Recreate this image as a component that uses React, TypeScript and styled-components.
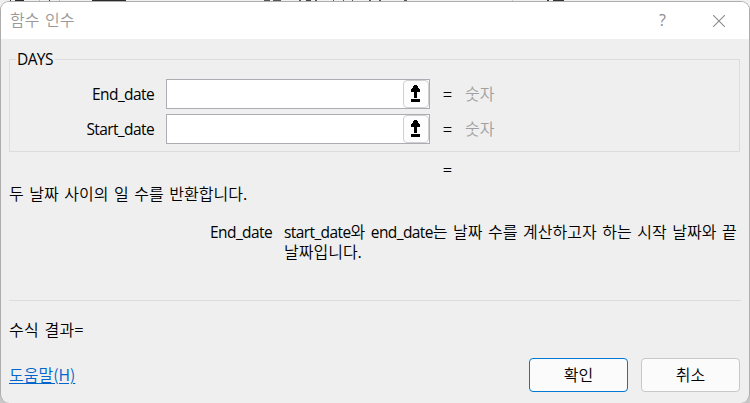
import React from 'react';
import styled, {createGlobalStyle} from 'styled-components';

const GlobalStyle = createGlobalStyle`
    * {
        box-sizing: border-box;
    }

    body {
        margin: 0;
        overflow: hidden;
    }
`;

// the sheet behind the dialog only peeks out along the edges
const Sheet = styled.div`
    width: 750px;
    height: 403px;
    padding-top: 1px;
    background:
        linear-gradient(90deg,
            transparent 10px, #333 10px 11px, transparent 11px 15px, #2b2b2b 15px 24px,
            transparent 24px 39px, #bbb 39px 40px, transparent 40px 49px, #333 49px 50px,
            transparent 50px 59px, #bbb 59px 60px, transparent 60px 92px, #2b2b2b 92px 126px,
            transparent 126px 264px, #555 264px 270px, transparent 270px 273px, #555 273px 281px,
            transparent 281px 299px, #555 299px 301px, transparent 301px 306px, #444 306px 311px,
            transparent 311px 315px, #555 315px 317px, transparent 317px 333px, #555 333px 334px,
            transparent 334px 343px, #555 343px 344px, transparent 344px 352px, #555 352px 353px,
            transparent 353px 369px, #555 369px 371px, transparent 371px 379px, #555 379px 381px,
            transparent 381px 404px, #555 404px 407px, transparent 407px 512px, #ccc 512px 513px,
            transparent 513px 547px, #333 547px 549px, transparent 549px 553px, #333 553px 564px,
            transparent 564px) 0 0 / 750px 1px no-repeat,
        linear-gradient(#f0f0f0 0 40px, #c8c8c8 40px 100%);
`;

const Dialog = styled.div`
    display: flex;
    flex-direction: column;
    width: 750px;
    height: 402px;
    border: 1px solid #adadad;
    border-bottom: 0;
    border-radius: 9px;
    overflow: hidden;
    background: #efefef;
    color: #000;
    font-family: "Noto Sans CJK KR", sans-serif;
    font-size: 16px;
    font-weight: 350;
    line-height: 20px;
    word-spacing: 2px;
`;

const TitleBar = styled.div`
    display: flex;
    align-items: center;
    height: 37px;
    flex: none;
    padding: 0 24px 0 9px;
    background: #fff;
    color: #999;
`;

const Title = styled.span`
    flex: 1;
    padding-bottom: 3px;
`;

const HelpMark = styled.span`
    margin-right: 47px;
    padding-bottom: 2px;
    color: #8c8c8c;
    font-family: "Open Sans", sans-serif;
    font-size: 16px;
    font-weight: 400;
`;

const Body = styled.div`
    display: flex;
    flex-direction: column;
    flex: 1;
    padding: 10px 8px 0;
`;

const Latin = styled.span`
    font-family: "Open Sans", sans-serif;
    font-size: 15.5px;
    font-weight: 400;
    letter-spacing: -0.6px;
    line-height: 1;
`;

const Group = styled.fieldset`
    height: 103px;
    margin: 0 1px 0 0;
    padding: 10px 0 0;
    border: 1px solid #dcdcdc;
    min-width: 0;
`;

const Legend = styled.legend`
    height: 20px;
    margin-left: 6px;
    padding: 0 2px 0 1px;
    line-height: 18px;
`;

const Field = styled.label`
    display: grid;
    grid-template-columns: 144px 264px 1fr;
    column-gap: 12px;
    align-items: center;
    height: 30px;
    margin-bottom: 5px;
`;

const FieldName = styled.span`
    text-align: right;
`;

const FieldLabel = styled(FieldName)`
    padding-bottom: 2px;
`;

const InputBox = styled.span`
    display: flex;
    height: 30px;
    border: 1px solid #abadb3;
    background: #fff;
`;

const Input = styled.input`
    flex: 1;
    min-width: 0;
    border: 0;
    outline: 0;
    padding: 0 4px;
    background: transparent;
    font: inherit;
`;

const PickButton = styled.button`
    display: flex;
    align-items: center;
    justify-content: center;
    width: 26px;
    height: 28px;
    padding: 0 1px 1px 0;
    border: 1px solid #d0d0d0;
    border-radius: 4px;
    background: #fdfdfd;
`;

const Preview = styled.span`
    display: flex;
    gap: 13px;
    padding: 0 0 2px 1px;
    color: #a0a0a0;
`;

const Equals = styled.span`
    width: 9px;
    color: #000;
    font-weight: 400;
`;

const ResultLine = styled.div`
    height: 20px;
    margin-top: 7px;
    padding-left: 434px;
`;

const Description = styled.p`
    margin: 4px 0 0;
`;

const ArgumentHelp = styled.div`
    display: grid;
    grid-template-columns: 263px 1fr;
    column-gap: 12px;
    height: 78px;
    margin-top: 19px;
    line-height: 19.5px;
    white-space: nowrap;
`;

const FormulaResult = styled.div`
    height: 50px;
    padding-top: 18px;
    border-top: 1px solid #dcdcdc;
    letter-spacing: 0.2px;
`;

const Footer = styled.div`
    display: flex;
    align-items: center;
    gap: 13px;
    height: 34px;
    margin-top: 8px;
    padding-right: 1px;
`;

const HelpLink = styled.a`
    margin-right: auto;
    padding-bottom: 2px;
    color: #0066cc;
    text-decoration: underline;
    text-underline-offset: 2px;
`;

const Button = styled.button<{$primary?: boolean}>`
    width: 99px;
    height: 34px;
    padding: 0 0 2px;
    border: 1px solid ${({$primary}) => ($primary ? '#0078d4' : '#c8c8c8')};
    border-radius: 4px;
    background: #fbfbfb;
    color: #000;
    font: inherit;
`;

const PickIcon = () => (
    <svg width="9" height="17" viewBox="0 0 9 17" shapeRendering="crispEdges">
        <path d="M3 0h3v1h1v2h1v1h1v3H6v6H3V7H0V4h1V3h1V1h1zM0 14h9v3H0z"/>
    </svg>
);

const CloseIcon = () => (
    <svg width="12" height="12" viewBox="0 0 12 12" stroke="#8c8c8c" strokeWidth="1.1">
        <path d="M0 0l12 12M12 0L0 12"/>
    </svg>
);

type ArgumentFieldProps = {
    readonly name: string;
};

const ArgumentField = ({name}: ArgumentFieldProps) => (
    <Field>
        <FieldLabel><Latin>{name}</Latin></FieldLabel>
        <InputBox>
            <Input/>
            <PickButton><PickIcon/></PickButton>
        </InputBox>
        <Preview><Equals>=</Equals>숫자</Preview>
    </Field>
);

const App = () => {
    return (
        <>
            <GlobalStyle/>
            <Sheet>
                <Dialog>
                    <TitleBar>
                        <Title>함수 인수</Title>
                        <HelpMark>?</HelpMark>
                        <CloseIcon/>
                    </TitleBar>
                    <Body>
                        <Group>
                            <Legend><Latin>DAYS</Latin></Legend>
                            <ArgumentField name="End_date"/>
                            <ArgumentField name="Start_date"/>
                        </Group>
                        <ResultLine>=</ResultLine>
                        <Description>두 날짜 사이의 일 수를 반환합니다.</Description>
                        <ArgumentHelp>
                            <FieldName><Latin>End_date</Latin></FieldName>
                            <span>
                                <Latin>start_date</Latin>와 <Latin>end_date</Latin>는 날짜 수를 계산하고자 하는 시작 날짜와 끝
                                <br/>
                                날짜입니다.
                            </span>
                        </ArgumentHelp>
                        <FormulaResult>수식 결과=</FormulaResult>
                        <Footer>
                            <HelpLink>도움말(H)</HelpLink>
                            <Button $primary>확인</Button>
                            <Button>취소</Button>
                        </Footer>
                    </Body>
                </Dialog>
            </Sheet>
        </>
    );
};

export default App;
